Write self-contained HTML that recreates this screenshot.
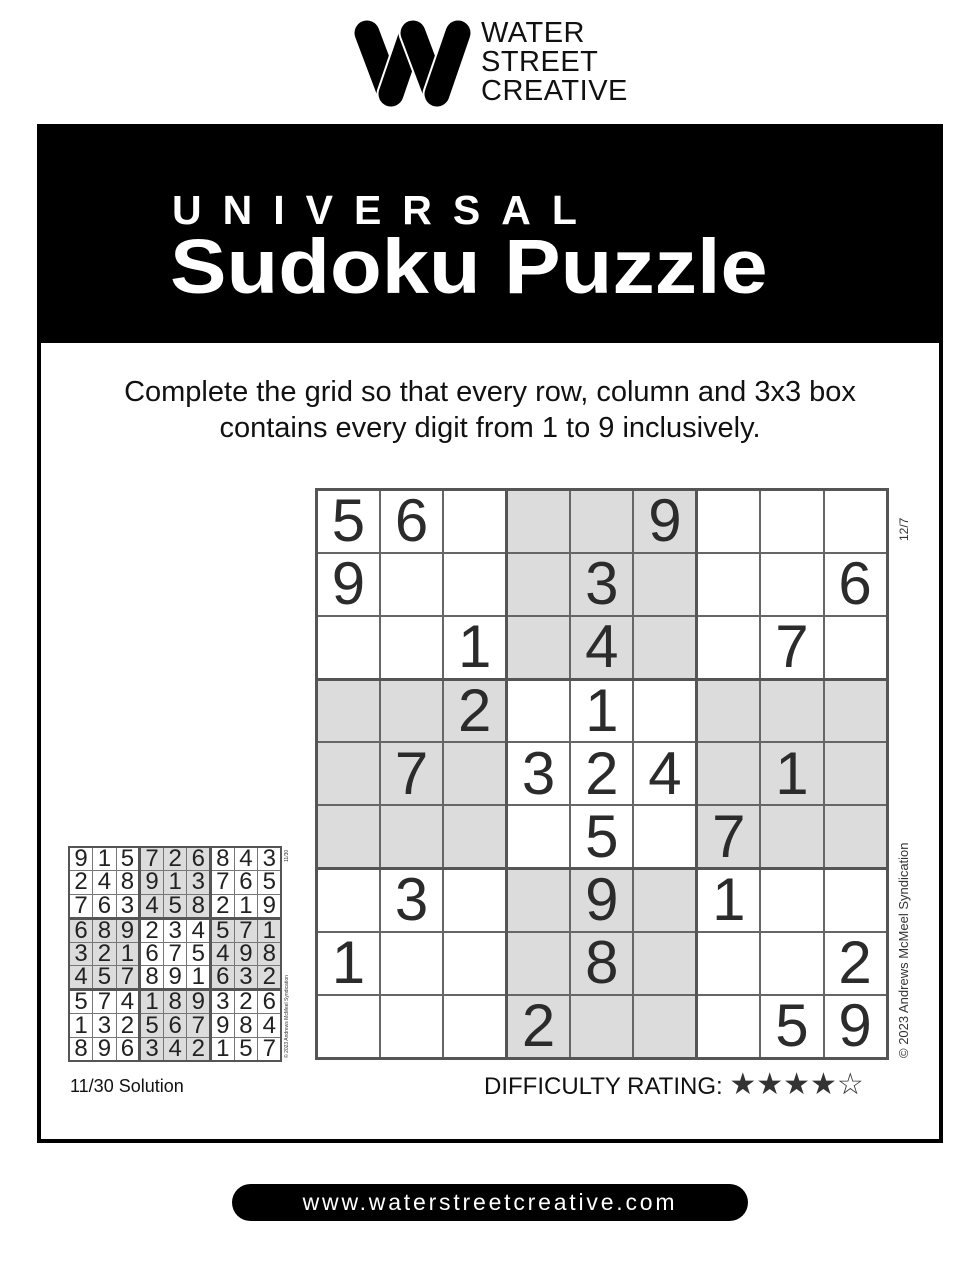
<!DOCTYPE html>
<html><head><meta charset="utf-8"><style>
*{margin:0;padding:0;box-sizing:border-box}
body{width:980px;height:1268px;background:#fff;position:relative;font-family:"Liberation Sans",Arial,sans-serif;overflow:hidden}
.abs{position:absolute}
.frame{left:37px;top:124px;width:906px;height:1019px;border:4px solid #000}
.head{left:37px;top:124px;width:906px;height:219px;background:#000}
.uni{left:172px;top:186px;color:#fff;font-weight:bold;font-size:41px;letter-spacing:21px;line-height:48px}
.sud{left:170px;top:224px;color:#fff;font-weight:bold;font-size:77px;line-height:86px;transform-origin:0 0;transform:scaleX(1.1);white-space:nowrap}
.instr{left:40px;width:900px;top:374px;text-align:center;font-size:29px;line-height:36px;color:#111}
table{border-collapse:collapse;position:absolute;table-layout:fixed}
.main{left:315px;top:488px;width:571px;height:569px;border:3px solid #555}
.main td{width:63.4px;height:63.2px;border:2px solid #666;font-size:60px;color:#2b2b2b;text-align:center;vertical-align:middle;line-height:56px;padding:0}
td.s{background:#dcdcdd}
.main td.r,.sm td.r{border-right:3px solid #555}
.main tr.b td,.sm tr.b td{border-bottom:3px solid #555}
.sm{left:68px;top:846px;width:213px;height:213px;border:2px solid #555}
.sm td{width:23.6px;height:23.6px;border:1px solid #777;font-size:24px;line-height:22px;text-align:center;color:#222;padding:0}
.rot{transform-origin:0 0;transform:rotate(-90deg);white-space:nowrap;color:#333}
</style></head><body>
<svg class="abs" style="left:350px;top:15px" width="130" height="100" viewBox="350 15 130 100">
<g stroke-linecap="round" fill="none">
<line x1="367" y1="33" x2="390" y2="94" stroke="#000" stroke-width="25"/>
<line x1="391" y1="94" x2="412" y2="33" stroke="#fff" stroke-width="29"/>
<line x1="391" y1="94" x2="412" y2="33" stroke="#000" stroke-width="25"/>
<line x1="413" y1="33" x2="436" y2="94" stroke="#fff" stroke-width="29"/>
<line x1="413" y1="33" x2="436" y2="94" stroke="#000" stroke-width="25"/>
<line x1="437" y1="94" x2="458" y2="33" stroke="#fff" stroke-width="29"/>
<line x1="437" y1="94" x2="458" y2="33" stroke="#000" stroke-width="25"/>
</g></svg>
<div class="abs" style="left:481px;top:19px;font-size:29px;line-height:29px;color:#111;letter-spacing:0.5px">WATER<br>STREET<br>CREATIVE</div>

<div class="abs head"></div>
<div class="abs frame"></div>
<div class="abs uni">UNIVERSAL</div>
<div class="abs sud">Sudoku Puzzle</div>
<div class="abs instr">Complete the grid so that every row, column and 3x3 box<br>contains every digit from 1 to 9 inclusively.</div>

<table class="main">
<tr><td>5</td><td>6</td><td class="r"></td><td class="s"></td><td class="s"></td><td class="s r">9</td><td></td><td></td><td></td></tr>
<tr><td>9</td><td></td><td class="r"></td><td class="s"></td><td class="s">3</td><td class="s r"></td><td></td><td></td><td>6</td></tr>
<tr class="b"><td></td><td></td><td class="r">1</td><td class="s"></td><td class="s">4</td><td class="s r"></td><td></td><td>7</td><td></td></tr>
<tr><td class="s"></td><td class="s"></td><td class="s r">2</td><td></td><td>1</td><td class="r"></td><td class="s"></td><td class="s"></td><td class="s"></td></tr>
<tr><td class="s"></td><td class="s">7</td><td class="s r"></td><td>3</td><td>2</td><td class="r">4</td><td class="s"></td><td class="s">1</td><td class="s"></td></tr>
<tr class="b"><td class="s"></td><td class="s"></td><td class="s r"></td><td></td><td>5</td><td class="r"></td><td class="s">7</td><td class="s"></td><td class="s"></td></tr>
<tr><td></td><td>3</td><td class="r"></td><td class="s"></td><td class="s">9</td><td class="s r"></td><td>1</td><td></td><td></td></tr>
<tr><td>1</td><td></td><td class="r"></td><td class="s"></td><td class="s">8</td><td class="s r"></td><td></td><td></td><td>2</td></tr>
<tr><td></td><td></td><td class="r"></td><td class="s">2</td><td class="s"></td><td class="s r"></td><td></td><td>5</td><td>9</td></tr>
</table>
<div class="abs rot" style="left:897px;top:541px;font-size:12px">12/7</div>
<div class="abs rot" style="left:896px;top:1058px;font-size:13px">© 2023 Andrews McMeel Syndication</div>

<table class="sm">
<tr><td>9</td><td>1</td><td class="r">5</td><td class="s">7</td><td class="s">2</td><td class="s r">6</td><td>8</td><td>4</td><td>3</td></tr>
<tr><td>2</td><td>4</td><td class="r">8</td><td class="s">9</td><td class="s">1</td><td class="s r">3</td><td>7</td><td>6</td><td>5</td></tr>
<tr class="b"><td>7</td><td>6</td><td class="r">3</td><td class="s">4</td><td class="s">5</td><td class="s r">8</td><td>2</td><td>1</td><td>9</td></tr>
<tr><td class="s">6</td><td class="s">8</td><td class="s r">9</td><td>2</td><td>3</td><td class="r">4</td><td class="s">5</td><td class="s">7</td><td class="s">1</td></tr>
<tr><td class="s">3</td><td class="s">2</td><td class="s r">1</td><td>6</td><td>7</td><td class="r">5</td><td class="s">4</td><td class="s">9</td><td class="s">8</td></tr>
<tr class="b"><td class="s">4</td><td class="s">5</td><td class="s r">7</td><td>8</td><td>9</td><td class="r">1</td><td class="s">6</td><td class="s">3</td><td class="s">2</td></tr>
<tr><td>5</td><td>7</td><td class="r">4</td><td class="s">1</td><td class="s">8</td><td class="s r">9</td><td>3</td><td>2</td><td>6</td></tr>
<tr><td>1</td><td>3</td><td class="r">2</td><td class="s">5</td><td class="s">6</td><td class="s r">7</td><td>9</td><td>8</td><td>4</td></tr>
<tr><td>8</td><td>9</td><td class="r">6</td><td class="s">3</td><td class="s">4</td><td class="s r">2</td><td>1</td><td>5</td><td>7</td></tr>
</table>
<div class="abs rot" style="left:284px;top:862px;font-size:5px">11/30</div>
<div class="abs rot" style="left:284px;top:1058px;font-size:5px">© 2023 Andrews McMeel Syndication</div>

<div class="abs" style="left:70px;top:1076px;font-size:18px;color:#111">11/30 Solution</div>
<div class="abs" style="left:484px;top:1068px;font-size:24px;line-height:34px;color:#111;white-space:nowrap">DIFFICULTY RATING: <span style="color:#333;font-size:30px;font-family:'DejaVu Sans',sans-serif;letter-spacing:0px">★★★★☆</span></div>

<div class="abs" style="left:232px;top:1184px;width:516px;height:37px;background:#000;border-radius:19px;color:#fff;font-size:23px;line-height:37px;text-align:center;letter-spacing:2.8px">www.waterstreetcreative.com</div>
</body></html>
